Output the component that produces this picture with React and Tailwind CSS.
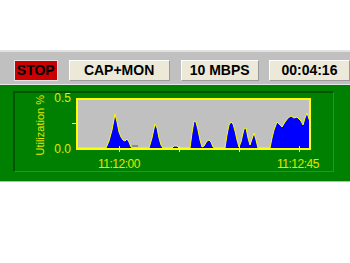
import React from 'react';

// utilization trace, in page pixels (x, y); baseline is y = 150
const trace = [
  [77, 150], [106, 150], [109, 143], [112, 132], [115, 116], [117, 124], [119, 134], [121, 139],
  [123, 142], [125, 143], [127, 141], [129, 144], [131, 149], [133, 150],
  [149, 150], [152, 140], [155, 126], [157, 130], [159, 140], [161, 147], [163, 150],
  [172, 150], [174, 148], [177, 148], [179, 150],
  [190, 150], [192, 135], [194, 123], [196, 124], [198, 132], [200, 142], [202, 149],
  [204, 148], [207, 143], [209, 142], [211, 144], [213, 149], [215, 150],
  [225, 150], [227, 137], [229, 127], [231, 124], [233, 126], [235, 133], [237, 142], [239, 149],
  [241, 144], [244, 131], [246, 130], [248, 140], [250, 147], [252, 141], [254, 135], [256, 142], [258, 150],
  [270, 150], [272, 140], [274, 132], [277, 124], [279, 126], [282, 129], [285, 124], [288, 120],
  [291, 118], [294, 120], [297, 119], [299, 121], [301, 123], [303, 127], [305, 120], [307, 115],
  [308, 118], [310, 124], [310, 150]
];

const pts = trace.map(([x, y]) => `${x - 72},${y - 100}`).join(' ');

const Box = ({ children, className }) => (
  <div
    className={`h-[21px] flex items-center justify-center text-[14px] font-bold text-black border border-t-white border-l-white border-b-[#9a9a9a] border-r-[#9a9a9a] ${className}`}
  >
    {children}
  </div>
);

const Plot = () => (
  <svg width="239" height="55" viewBox="0 0 239 55" className="block overflow-visible">
    <rect x="4" y="0" width="235" height="52" fill="#c0c0c0" />
    <rect x="60" y="47" width="6" height="2" fill="#8a8a8a" />
    <polygon points={pts} fill="#0000ff" />
    <polyline points={pts} fill="none" stroke="#ffff00" strokeWidth="1" />
    <rect x="5" y="1" width="233" height="50" fill="none" stroke="#ffff00" strokeWidth="2" />
    <line x1="0" y1="25.5" x2="5" y2="25.5" stroke="#ffff00" strokeWidth="1" />
    {[119, 179, 239, 299].map((x) => (
      <line key={x} x1={x - 72 + 0.5} y1="48" x2={x - 72 + 0.5} y2="54" stroke="#ffff00" strokeWidth="1" />
    ))}
  </svg>
);

const App = () => {
  return (
    <div className="w-[350px] h-[263px] bg-white flex flex-col font-['Liberation_Sans',Arial,sans-serif]">
      <div className="h-[50px]" />
      <div className="h-[2px] bg-[#e2e2e2]" />

      {/* status bar */}
      <div className="h-[33px] bg-[#c0c0c0] border-b border-[#e6e6e6] flex items-start gap-[11px] pl-[14px] pt-[8px]">
        <div className="h-[21px] w-[44px] flex items-center justify-center bg-[#cc0000] border border-[#e4e4e4] text-[14px] font-bold text-black">
          STOP
        </div>
        <Box className="w-[102px] bg-[#ece9d8]">CAP+MON</Box>
        <Box className="w-[79px] bg-[#ece9d8]">10 MBPS</Box>
        <Box className="w-[82px] bg-[#ece9d8] ml-[-1px]">00:04:16</Box>
      </div>

      {/* chart area */}
      <div className="h-[97px] bg-[#008000] border-b border-[#9ccf9c] pl-[13px] pt-[6px]">
        <div className="w-[321px] h-[81px] border-t-2 border-l-2 border-t-[#005400] border-l-[#005400] border-b border-r border-b-[#1f9a1f] border-r-[#1f9a1f] flex text-[#e6e600]">
          <div className="w-[36px] pl-[14px] h-[64px] flex items-center justify-center">
            <span className="[writing-mode:vertical-rl] rotate-180 text-[11px] leading-[12px] whitespace-nowrap">
              Utilization %
            </span>
          </div>
          <div className="w-[21px] h-[61px] flex flex-col justify-between items-end pr-[1px] text-[12px] leading-[10px]">
            <span>0.5</span>
            <span>0.0</span>
          </div>
          <div className="pt-[5px] flex flex-col">
            <Plot />
            <div className="flex mt-[5px] pl-[17px] text-[12px] leading-[12px] tracking-[-0.5px]">
              <span className="w-[60px] text-center">11:12:00</span>
              <span className="w-[60px] text-center ml-[119px]">11:12:45</span>
            </div>
          </div>
        </div>
      </div>
    </div>
  );
};

export default App;
